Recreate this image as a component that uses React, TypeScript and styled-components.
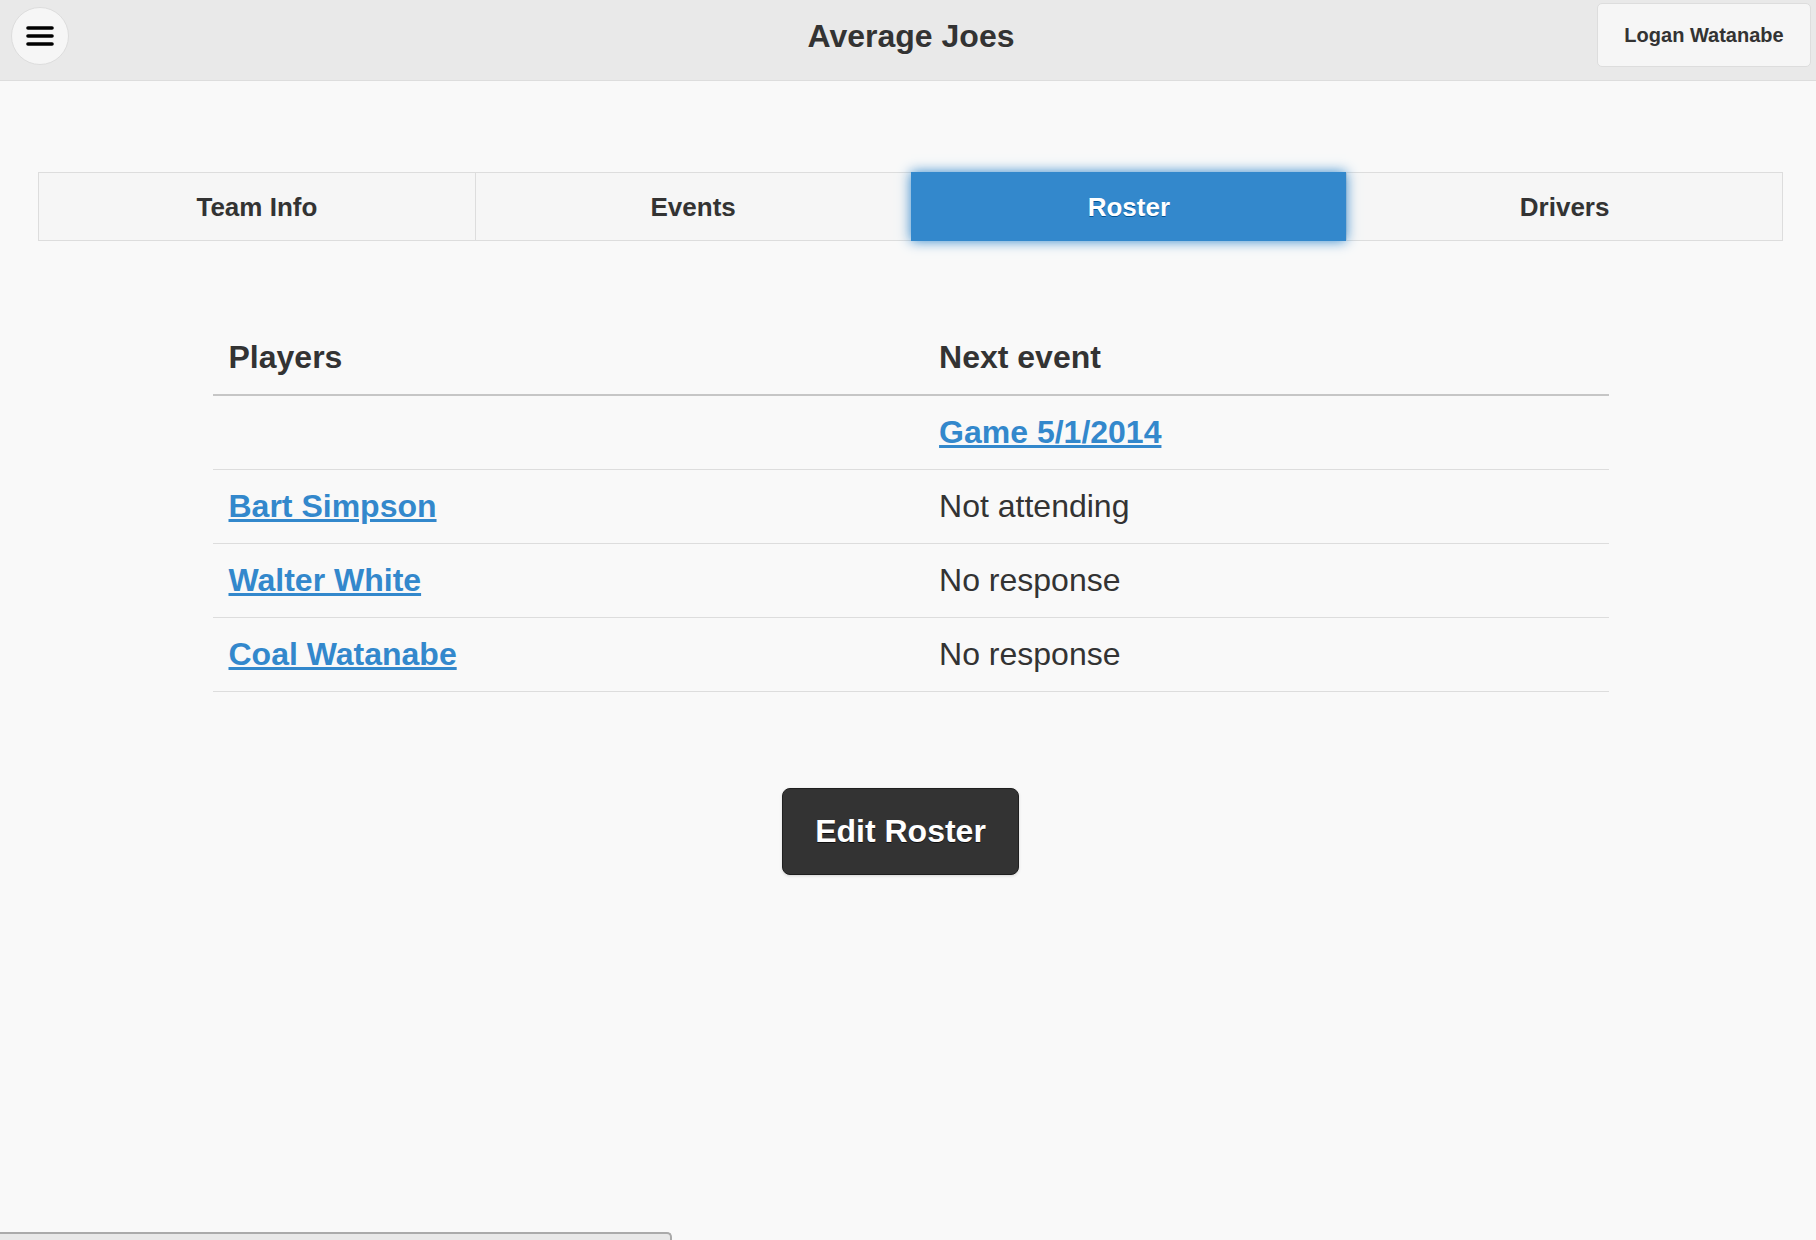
import React from "react";
import styled, { createGlobalStyle } from "styled-components";

const Global = createGlobalStyle`
  html, body { margin: 0; padding: 0; background: #f9f9f9; }
  body { font-family: "Liberation Sans", Arial, Helvetica, sans-serif; color: #333; }
  * { box-sizing: border-box; }
`;

const Page = styled.div`
  min-height: 1240px;
  display: flex;
  flex-direction: column;
  background: #f9f9f9;
`;

const Header = styled.header`
  height: 81px;
  background: #e9e9e9;
  border-bottom: 1px solid #dddddd;
  padding: 3px 5px 0 11px;
  display: grid;
  grid-template-columns: 1fr auto 1fr;
  align-items: start;
`;

const HeaderRow = styled.div<{ $align: "start" | "end" }>`
  height: 64px;
  display: flex;
  align-items: center;
  justify-content: ${(p) => (p.$align === "end" ? "flex-end" : "flex-start")};
`;

const MenuButton = styled.button`
  width: 58px;
  height: 58px;
  margin-top: 2px;
  border-radius: 50%;
  border: 1px solid #dddddd;
  background: #f6f6f6;
  padding: 0;
  display: flex;
  align-items: center;
  justify-content: center;
  cursor: pointer;
`;

const Title = styled.h1`
  margin: 0;
  height: 64px;
  padding-top: 3px;
  display: flex;
  align-items: center;
  font-size: 32px;
  font-weight: bold;
  color: #333;
  text-shadow: 0 1px 0 #eeeeee;
`;

const UserButton = styled.button`
  width: 214px;
  height: 64px;
  border: 1px solid #dddddd;
  border-radius: 5px;
  background: #f6f6f6;
  font-family: "Liberation Sans", Arial, sans-serif;
  font-size: 20px;
  font-weight: bold;
  color: #333;
  text-shadow: 0 1px 0 #f3f3f3;
  cursor: pointer;
`;

const Content = styled.main`
  padding: 91px 33px 0 38px;
  display: flex;
  flex-direction: column;
  align-items: stretch;
`;

const NavBar = styled.nav`
  display: grid;
  grid-template-columns: repeat(4, 1fr);
  border: 1px solid #dddddd;
  height: 69px;
`;

const Tab = styled.a<{ $active?: boolean; $first?: boolean }>`
  position: relative;
  display: flex;
  align-items: center;
  justify-content: center;
  padding-top: 2px;
  font-size: 26px;
  font-weight: bold;
  text-decoration: none;
  cursor: pointer;
  border-left: ${(p) => (p.$first ? "none" : "1px solid #dddddd")};
  background: ${(p) => (p.$active ? "#3388cc" : "#f6f6f6")};
  color: ${(p) => (p.$active ? "#ffffff" : "#333333")};
  text-shadow: ${(p) => (p.$active ? "0 1px 0 #005599" : "0 1px 0 #f3f3f3")};
  ${(p) =>
    p.$active
      ? `margin: -1px 0; border-left-color: #3388cc; box-shadow: 0 0 12px #3388cc; z-index: 1;`
      : ""}
`;

const Table = styled.table`
  width: 80%;
  margin: 80px auto 0;
  border-collapse: collapse;
  table-layout: fixed;
`;

const HeadCell = styled.th<{ $w?: string }>`
  width: ${(p) => p.$w || "auto"};
  height: 74px;
  padding: 0 16px;
  text-align: left;
  font-size: 32px;
  font-weight: bold;
  color: #333;
  border-bottom: 2px solid #c6c6c6;
`;

const Row = styled.tr`
  border-bottom: 1px solid #dddddd;
`;

const Cell = styled.td`
  height: 74px;
  padding: 0 16px;
  font-size: 32px;
  color: #333;
  vertical-align: middle;
`;

const Link = styled.a`
  color: #3388cc;
  font-weight: bold;
  text-decoration: underline;
  cursor: pointer;
`;

const ButtonWrap = styled.div`
  display: flex;
  justify-content: center;
  padding-right: 20px;
  margin-top: 96px;
`;

const EditButton = styled.button`
  height: 87px;
  padding: 0 32px;
  border: 1px solid #1f1f1f;
  border-radius: 8px;
  background: #333333;
  color: #ffffff;
  font-family: "Liberation Sans", Arial, sans-serif;
  font-size: 32px;
  font-weight: bold;
  text-shadow: 0 1px 0 #111111;
  box-shadow: 0 1px 3px rgba(0, 0, 0, 0.15);
  cursor: pointer;
`;

const Spacer = styled.div`
  flex: 1;
`;

const BottomBar = styled.div`
  width: 672px;
  height: 8px;
  border: 2px solid #aaaaaa;
  border-bottom: none;
  border-left: none;
  border-top-right-radius: 5px;
  background: #e8e8e8;
`;

const MenuIcon = () => (
  <svg width="30" height="24" viewBox="0 0 30 24">
    <g stroke="#000" strokeWidth="3.6" strokeLinecap="round">
      <line x1="3" y1="4" x2="27" y2="4" />
      <line x1="3" y1="12" x2="27" y2="12" />
      <line x1="3" y1="20" x2="27" y2="20" />
    </g>
  </svg>
);

const players = [
  { name: "Bart Simpson", status: "Not attending" },
  { name: "Walter White", status: "No response" },
  { name: "Coal Watanabe", status: "No response" },
];

export default function App() {
  return (
    <>
      <Global />
      <Page>
        <Header>
          <HeaderRow $align="start">
            <MenuButton aria-label="Menu">
              <MenuIcon />
            </MenuButton>
          </HeaderRow>
          <Title>Average Joes</Title>
          <HeaderRow $align="end">
            <UserButton>Logan Watanabe</UserButton>
          </HeaderRow>
        </Header>
        <Content>
          <NavBar>
            <Tab $first>Team Info</Tab>
            <Tab>Events</Tab>
            <Tab $active>Roster</Tab>
            <Tab>Drivers</Tab>
          </NavBar>
          <Table>
            <thead>
              <tr>
                <HeadCell $w="50.9%">Players</HeadCell>
                <HeadCell>Next event</HeadCell>
              </tr>
            </thead>
            <tbody>
              <Row>
                <Cell />
                <Cell>
                  <Link>Game 5/1/2014</Link>
                </Cell>
              </Row>
              {players.map((p) => (
                <Row key={p.name}>
                  <Cell>
                    <Link>{p.name}</Link>
                  </Cell>
                  <Cell>{p.status}</Cell>
                </Row>
              ))}
            </tbody>
          </Table>
          <ButtonWrap>
            <EditButton>Edit Roster</EditButton>
          </ButtonWrap>
        </Content>
        <Spacer />
        <BottomBar />
      </Page>
    </>
  );
}
